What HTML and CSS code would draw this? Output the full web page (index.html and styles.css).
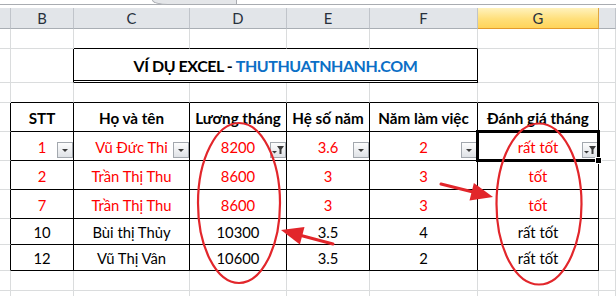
FILE: index.html
```html
<!DOCTYPE html>
<html lang="vi">
<head>
<meta charset="utf-8">
<title>Ví dụ Excel</title>
<link rel="stylesheet" href="styles.css">
</head>
<body>
<div class="strip"><div class="tab"></div></div>
<div class="sheet">
  <!-- column headers -->
  <div class="c h"></div>
  <div class="c h">B</div>
  <div class="c h">C</div>
  <div class="c h">D</div>
  <div class="c h">E</div>
  <div class="c h">F</div>
  <div class="c h act">G</div>
  <div class="c h"></div>

  <!-- row 1 -->
  <div class="c"></div>
  <div class="c"></div>
  <div class="c bb"></div>
  <div class="c bb"></div>
  <div class="c bb"></div>
  <div class="c bb"></div>
  <div class="c"></div>
  <div class="c"></div>

  <!-- row 2: title -->
  <div class="c"></div>
  <div class="c br"></div>
  <div class="c title">VÍ DỤ EXCEL -&nbsp;<span class="blue">THUTHUATNHANH.COM</span></div>
  <div class="c"></div>
  <div class="c"></div>

  <!-- row 3 -->
  <div class="c"></div>
  <div class="c bb"></div>
  <div class="c bb"></div>
  <div class="c bb"></div>
  <div class="c bb"></div>
  <div class="c bb"></div>
  <div class="c bb"></div>
  <div class="c"></div>

  <!-- row 4: table header -->
  <div class="c br"></div>
  <div class="c br bb th">STT</div>
  <div class="c br bb th">Họ và tên</div>
  <div class="c br bb th">Lương tháng</div>
  <div class="c br bb th">Hệ số năm</div>
  <div class="c br bb th">Năm làm việc</div>
  <div class="c br bb th">Đánh giá tháng</div>
  <div class="c"></div>

  <!-- row 5 -->
  <div class="c br"></div>
  <div class="c br bb red">1<span class="fbtn"><svg width="14" height="14" viewBox="0 0 14 14"><polygon points="4,6 10,6 7,9" fill="#3b3b3b"/></svg></span></div>
  <div class="c br bb red">Vũ Đức Thi<span class="fbtn"><svg width="14" height="14" viewBox="0 0 14 14"><polygon points="4,6 10,6 7,9" fill="#3b3b3b"/></svg></span></div>
  <div class="c br bb red">8200<span class="fbtn"><svg width="14" height="14" viewBox="0 0 14 14"><polygon points="6,3 13,3 10.5,6.5 10.5,11 8.5,11 8.5,6.5" fill="#3b3b3b"/><polygon points="1,8 6,8 3.5,10.5" fill="#3b3b3b"/></svg></span></div>
  <div class="c br bb red">3.6<span class="fbtn"><svg width="14" height="14" viewBox="0 0 14 14"><polygon points="4,6 10,6 7,9" fill="#3b3b3b"/></svg></span></div>
  <div class="c br bb red">2<span class="fbtn"><svg width="14" height="14" viewBox="0 0 14 14"><polygon points="4,6 10,6 7,9" fill="#3b3b3b"/></svg></span></div>
  <div class="c br bb red">rất tốt<span class="fbtn"><svg width="14" height="14" viewBox="0 0 14 14"><polygon points="6,3 13,3 10.5,6.5 10.5,11 8.5,11 8.5,6.5" fill="#3b3b3b"/><polygon points="1,8 6,8 3.5,10.5" fill="#3b3b3b"/></svg></span><span class="sel"><span class="handle"></span></span></div>
  <div class="c"></div>

  <!-- row 6 -->
  <div class="c br"></div>
  <div class="c br bb red">2</div>
  <div class="c br bb red">Trần Thị Thu</div>
  <div class="c br bb red">8600</div>
  <div class="c br bb red">3</div>
  <div class="c br bb red">3</div>
  <div class="c br bb red">tốt</div>
  <div class="c"></div>

  <!-- row 7 -->
  <div class="c br"></div>
  <div class="c br bb red">7</div>
  <div class="c br bb red">Trần Thị Thu</div>
  <div class="c br bb red">8600</div>
  <div class="c br bb red">3</div>
  <div class="c br bb red">3</div>
  <div class="c br bb red">tốt</div>
  <div class="c"></div>

  <!-- row 8 -->
  <div class="c br"></div>
  <div class="c br bb">10</div>
  <div class="c br bb">Bùi thị Thủy</div>
  <div class="c br bb">10300</div>
  <div class="c br bb">3.5</div>
  <div class="c br bb">4</div>
  <div class="c br bb">rất tốt</div>
  <div class="c"></div>

  <!-- row 9 -->
  <div class="c br"></div>
  <div class="c br bb">12</div>
  <div class="c br bb">Vũ Thị Vân</div>
  <div class="c br bb">10600</div>
  <div class="c br bb">3.5</div>
  <div class="c br bb">2</div>
  <div class="c br bb">rất tốt</div>
  <div class="c"></div>

  <!-- rows 10-11 -->
  <div class="c"></div><div class="c"></div><div class="c"></div><div class="c"></div>
  <div class="c"></div><div class="c"></div><div class="c"></div><div class="c"></div>
  <div class="c"></div><div class="c"></div><div class="c"></div><div class="c"></div>
  <div class="c"></div><div class="c"></div><div class="c"></div><div class="c"></div>
</div>

<svg class="marks" width="616" height="296" viewBox="0 0 616 296">
  <g fill="none" stroke="#e2262b" stroke-width="2.2">
    <ellipse cx="239" cy="203" rx="41" ry="80"/>
    <ellipse cx="539" cy="204" rx="42.5" ry="80.5"/>
  </g>
  <g stroke="#e2262b" stroke-width="3" stroke-linecap="round">
    <line x1="333" y1="244" x2="302" y2="235.7"/>
    <line x1="441" y1="184" x2="472" y2="191.7"/>
  </g>
  <g fill="#e2262b">
    <polygon points="281,230 304.5,227 299.9,244.4"/>
    <polygon points="493,197 469.5,200.4 473.9,183"/>
  </g>
</svg>
</body>
</html>
```
FILE: styles.css
```css
html, body {
  margin: 0;
  padding: 0;
}

body {
  width: 616px;
  height: 296px;
  overflow: hidden;
  position: relative;
  background: #ffffff;
  font-family: Lato, "Noto Sans", "DejaVu Sans", sans-serif;
  color: #000;
}

.strip {
  height: 4px;
  border-bottom: 1px solid #a9acb1;
  margin-bottom: 3px;
  display: flex;
}

.tab {
  margin-left: 152px;
  width: 83px;
  height: 4px;
  background: #e4e6e9;
  border-left: 1px solid #a9acb1;
  border-right: 1px solid #a9acb1;
  border-bottom: 1px solid #a9acb1;
  border-bottom-left-radius: 16px 5px;
}

.sheet {
  display: grid;
  grid-template-columns: 11px 63px 116px 97px 83px 108px 121px 1fr;
  grid-template-rows: 21px 20px 34px 20px 29px 29px 29px 29px 26px 26px 20px 20px;
}

.c {
  box-sizing: border-box;
  border-right: 1px solid #dadcdd;
  border-bottom: 1px solid #dadcdd;
  display: flex;
  align-items: center;
  justify-content: center;
  font-size: 14.8px;
  padding-top: 1px;
  position: relative;
  white-space: nowrap;
}

.h {
  background: #e2e5e9;
  border-right-color: #c0c4ca;
  border-bottom-color: #a9aeb4;
  color: #27303c;
  padding-top: 0;
}

.h.act {
  background: linear-gradient(#fff2bd, #ffdf7a 55%, #ffd45a);
  border-right-color: #e0a640;
  border-bottom-color: #e39a2b;
}

.br {
  border-right-color: #000;
}

.bb {
  border-bottom-color: #000;
}

.title {
  grid-column: 3 / 7;
  border-right-color: #000;
  border-bottom: 3px double #000;
  font-weight: 700;
  font-size: 16px;
  letter-spacing: -0.45px;
  padding-top: 1px;
}

.blue {
  color: #0b6fc6;
}

.th {
  font-weight: 700;
  font-size: 15.2px;
  padding-top: 2px;
}

.red {
  color: #ff0000;
}

.fbtn {
  position: absolute;
  right: 0;
  bottom: 2px;
  width: 16px;
  height: 16px;
  box-sizing: border-box;
  border: 1px solid #a3a8ae;
  background: linear-gradient(#fdfdfd, #dfe2e6);
  display: flex;
}

.sel {
  position: absolute;
  top: -2px;
  left: -2px;
  right: -2px;
  bottom: -2px;
  border: 3px double #000;
  z-index: 3;
}

.handle {
  position: absolute;
  right: -5px;
  bottom: -5px;
  width: 5px;
  height: 5px;
  background: #000;
  border: 1px solid #fff;
}

.marks {
  position: absolute;
  left: 0;
  top: 0;
  z-index: 5;
  pointer-events: none;
}
```
